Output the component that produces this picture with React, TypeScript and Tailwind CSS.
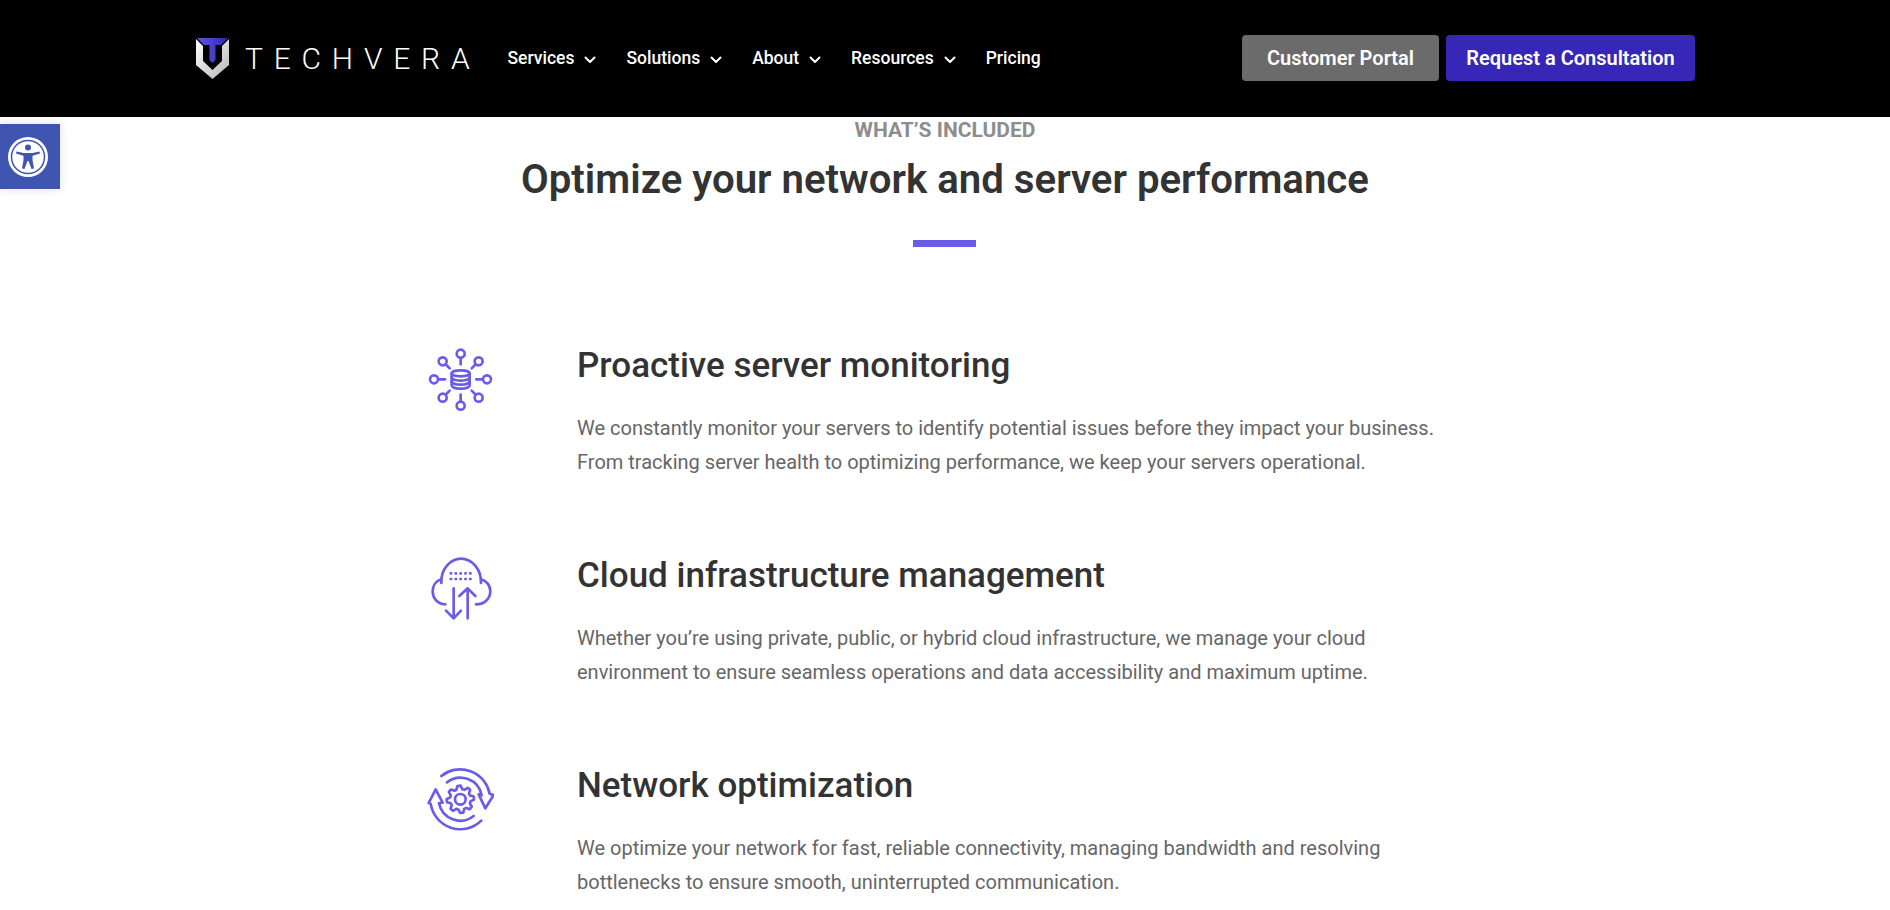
const navItems = [
  { label: "Services", caret: true },
  { label: "Solutions", caret: true },
  { label: "About", caret: true },
  { label: "Resources", caret: true },
  { label: "Pricing", caret: false },
];

function Logo() {
  return (
    <div className="flex items-center">
      <svg width="33" height="41" viewBox="0 0 33 41" className="ml-[1px]">
        <defs>
          <linearGradient id="side" x1="0" y1="0" x2="1" y2="1">
            <stop offset="0" stopColor="#ffffff" />
            <stop offset="1" stopColor="#b5b5b5" />
          </linearGradient>
          <linearGradient id="top" x1="0" y1="0" x2="1" y2="0">
            <stop offset="0" stopColor="#5d58d8" />
            <stop offset="0.5" stopColor="#4a3fcb" />
            <stop offset="1" stopColor="#3024ae" />
          </linearGradient>
        </defs>
        <path d="M0 1V27L16.5 41L33 27V1L26 8V23L16.5 32L7 23V8Z" fill="url(#side)" />
        <path d="M1 0H32L25 7H19.5V22L16.5 25L13.500 22V7H8Z" fill="url(#top)" />
      </svg>
      <span className="ml-[16px] text-[30px] leading-none font-light tracking-[0.36em] text-white font-['Roboto',sans-serif]">
        TECHVERA
      </span>
    </div>
  );
}

function Caret() {
  return (
    <svg width="12" height="8" viewBox="0 0 12 8" fill="none" className="ml-[10px] mt-[2px]">
      <path d="M1.500 1.500L6 6L10.500 1.500" stroke="white" strokeWidth="2" strokeLinecap="round" strokeLinejoin="round" />
    </svg>
  );
}

function ServerIcon() {
  const nodes = [
    { c: [151, 68], l: [151, 84, 151, 100] },
    { c: [230, 145], l: [214, 145, 198, 145] },
    { c: [71, 145], l: [87, 145, 104, 145] },
    { c: [97, 91], l: [108, 102, 118, 112] },
    { c: [205, 91], l: [194, 102, 184, 112] },
    { c: [97, 200], l: [108, 189, 118, 179] },
    { c: [205, 200], l: [194, 189, 184, 179] },
    { c: [151, 224], l: [151, 208, 151, 191] },
  ];
  return (
    <svg viewBox="50 45 200 200" className="w-[66.67px] h-[66.67px]" fill="none" stroke="#6b5ce7" strokeWidth="8" strokeLinecap="round">
      {nodes.map((n) => (
        <g key={n.c.join()}>
          <circle cx={n.c[0]} cy={n.c[1]} r="12" />
          <line x1={n.l[0]} y1={n.l[1]} x2={n.l[2]} y2={n.l[3]} />
        </g>
      ))}
      <ellipse cx="151" cy="127" rx="27" ry="9" />
      <path d="M124 127V163C124 169 136 173 151 173C166 173 178 169 178 163V127" />
      <path d="M124 139C124 145 136 149 151 149C166 149 178 145 178 139" />
      <path d="M124 151C124 157 136 161 151 161C166 161 178 157 178 151" />
    </svg>
  );
}

function CloudIcon() {
  const dots = [122, 136.5, 151, 165.5, 180];
  return (
    <svg viewBox="50 45 200 200" className="w-[66.67px] h-[66.67px]" fill="none" stroke="#6b5ce7" strokeWidth="8" strokeLinecap="round" strokeLinejoin="round">
      <path d="M93 126C91 85 120 53 152 53C185 53 213 85 212 126" />
      <path d="M105 190C80 190 67 170 67 151C67 132 78 119 93 115" />
      <path d="M197 190C225 190 240 170 240 151C240 132 227 119 212 115" />
      {dots.map((x) => (
        <g key={x} fill="#6b5ce7" stroke="none">
          <rect x={x - 4} y="93" width="8" height="8" rx="2" />
          <rect x={x - 4} y="110" width="8" height="8" rx="2" />
        </g>
      ))}
      <path d="M130 142V232M107 209L130 232L152 209" />
      <path d="M172 232V142M147 165L172 142L195 165" />
    </svg>
  );
}

function GearIcon() {
  const teeth = 8;
  const pts: string[] = [];
  for (let i = 0; i < teeth; i++) {
    const a = (i / teeth) * Math.PI * 2;
    const step = (Math.PI * 2) / teeth;
    [
      [31, -0.5],
      [41, -0.27],
      [41, 0.02],
      [31, 0.02],
    ].forEach(([r, o], j) => {
      const t = j < 3 ? a + o * step : a + 0.25 * step;
      pts.push(`${(150 + r * Math.cos(t)).toFixed(1)},${(145 + r * Math.sin(t)).toFixed(1)}`);
    });
  }
  return (
    <svg viewBox="50 45 200 200" className="w-[66.67px] h-[66.67px]" fill="none" stroke="#6b5ce7" strokeWidth="8" strokeLinecap="round" strokeLinejoin="round">
      <polygon points={pts.join(" ")} />
      <circle cx="150" cy="145" r="16" />
      <path d="M93 75A90 90 0 0 1 238 128L250 132L225 172L205 130L214 133A65 65 0 0 0 110 94" />
      <path d="M213 209A90 90 0 0 1 61 158L55 156L76 115L97 155L86 156A65 65 0 0 0 190 195" />
    </svg>
  );
}

const rows = [
  {
    icon: <ServerIcon />,
    title: "Proactive server monitoring",
    lines: [
      "We constantly monitor your servers to identify potential issues before they impact your business.",
      "From tracking server health to optimizing performance, we keep your servers operational.",
    ],
  },
  {
    icon: <CloudIcon />,
    title: "Cloud infrastructure management",
    lines: [
      "Whether you’re using private, public, or hybrid cloud infrastructure, we manage your cloud",
      "environment to ensure seamless operations and data accessibility and maximum uptime.",
    ],
  },
  {
    icon: <GearIcon />,
    title: "Network optimization",
    lines: [
      "We optimize your network for fast, reliable connectivity, managing bandwidth and resolving",
      "bottlenecks to ensure smooth, uninterrupted communication.",
    ],
  },
];

export default function App() {
  return (
    <div className="relative h-[910px] overflow-hidden bg-white font-['Roboto',sans-serif]">
      <header className="h-[117px] bg-black">
        <div className="mx-auto flex h-full w-[1500px] items-center">
          <Logo />
          <nav className="ml-[27px] flex items-center gap-[30px]">
            {navItems.map((item) => (
              <a key={item.label} className="flex items-center text-[17.5px] font-medium text-white">
                {item.label}
                {item.caret && <Caret />}
              </a>
            ))}
          </nav>
          <div className="mb-[2px] ml-auto flex gap-[7px]">
            <a className="flex h-[46px] w-[197px] items-center justify-center rounded-[4px] bg-[#6b6b6b] text-[20px] font-semibold text-white">
              Customer Portal
            </a>
            <a className="flex h-[46px] w-[249px] items-center justify-center rounded-[4px] bg-[#3627b6] text-[20px] font-semibold text-white">
              Request a Consultation
            </a>
          </div>
        </div>
      </header>

      {/* accessibility tab */}
      <div className="absolute left-0 top-[124px] flex h-[65px] w-[60px] items-center justify-center bg-[#4054b2] shadow-[0_0_10px_rgba(0,0,0,0.12)]">
        <svg width="40" height="40" viewBox="0 0 40 40" className="-ml-[5px]">
          <circle cx="20" cy="20" r="20" fill="white" />
          <circle cx="20" cy="20" r="16.500" fill="white" stroke="#4054b2" strokeWidth="1.500" />
          <circle cx="20" cy="10.500" r="3" fill="#4054b2" />
          <path d="M8.500 14.500L15.500 16H24.500L31.500 14.500L32 16.500L24.500 18.800V23L26 31.500L23.500 32L20.500 24H19.500L16.500 32L14 31.500L15.500 23V18.800L8 16.500Z" fill="#4054b2" />
        </svg>
      </div>

      <section className="flex flex-col items-center">
        <p className="mt-[1px] text-[21px] leading-[24px] font-bold text-[#8d8d8d]">WHAT’S INCLUDED</p>
        <h2 className="mt-[13px] text-[40.2px] leading-[50px] font-semibold text-[#333333]">
          Optimize your network and server performance
        </h2>
        <div className="mr-[2px] mt-[35px] h-[7px] w-[63px] bg-[#6b5ce7]" />
      </section>

      <section className="mx-auto mt-[99px] flex w-[1036px] flex-col">
        {rows.map((row) => (
          <div key={row.title} className="flex h-[210px]">
            <div className="w-[150px] shrink-0">{row.icon}</div>
            <div>
              <h3 className="text-[35px] leading-[40px] font-medium text-[#333333]">{row.title}</h3>
              <p className="mt-[25px] text-[20px] leading-[34px] text-[#666666]">
                {row.lines[0]}
                <br />
                {row.lines[1]}
              </p>
            </div>
          </div>
        ))}
      </section>
    </div>
  );
}
